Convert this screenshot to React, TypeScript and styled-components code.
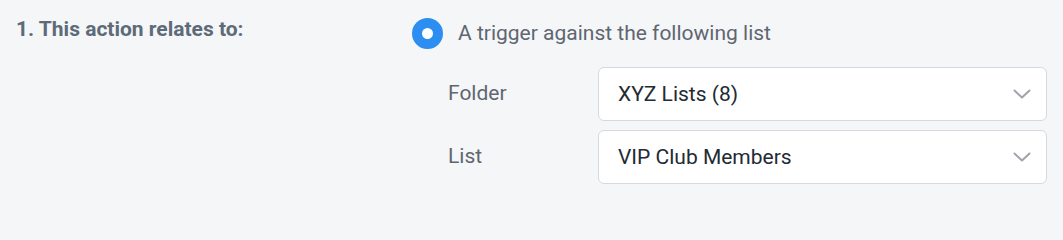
import React from "react";
import styled, { createGlobalStyle } from "styled-components";

const Global = createGlobalStyle`
  html, body { margin: 0; padding: 0; background: #f5f6f8; }
  body { font-family: Roboto, "Liberation Sans", Arial, sans-serif; }
`;

const Section = styled.div`
  display: grid;
  grid-template-columns: 396px 1fr;
  padding: 18px 16px 17px 16px;
  background: #f5f6f8;
`;

const Title = styled.div`
  font-size: 21px;
  font-weight: 700;
  color: #5d6b79;
  line-height: 22px;
`;

const Options = styled.div`
  display: flex;
  flex-direction: column;
`;

const RadioRow = styled.label`
  display: flex;
  align-items: center;
  gap: 15px;
  height: 31px;
  margin-bottom: 18px;
`;

const RadioDot = styled.span`
  box-sizing: border-box;
  width: 31px;
  height: 31px;
  border-radius: 50%;
  border: 10px solid #2c8ef0;
  background: #fff;
  flex: none;
`;

const RadioText = styled.span`
  font-size: 21px;
  color: #5f6670;
  margin-top: -2px;
`;

const Fields = styled.div`
  display: grid;
  grid-template-columns: 150px 1fr;
  row-gap: 9px;
  padding-left: 36px;
  align-items: center;
`;

const FieldLabel = styled.span`
  font-size: 21px;
  color: #5f6670;
  margin-top: -3px;
`;

const Select = styled.div`
  box-sizing: border-box;
  height: 54px;
  display: flex;
  align-items: center;
  justify-content: space-between;
  background: #fff;
  border: 1px solid #d6d9de;
  border-radius: 6px;
  padding: 0 15px 0 19px;
`;

const SelectValue = styled.span`
  font-size: 21px;
  color: #232a33;
`;

const Chevron = () => (
  <svg width="18" height="10" viewBox="0 0 18 10" fill="none">
    <path d="M1.5 1.5 L9 8.5 L16.5 1.5" stroke="#9ea4ac" strokeWidth="2" strokeLinecap="round" strokeLinejoin="round" />
  </svg>
);

export default function App() {
  return (
    <>
      <Global />
      <Section>
        <Title>1. This action relates to:</Title>
        <Options>
          <RadioRow>
            <RadioDot />
            <RadioText>A trigger against the following list</RadioText>
          </RadioRow>
          <Fields>
            <FieldLabel>Folder</FieldLabel>
            <Select>
              <SelectValue>XYZ Lists (8)</SelectValue>
              <Chevron />
            </Select>
            <FieldLabel>List</FieldLabel>
            <Select>
              <SelectValue>VIP Club Members</SelectValue>
              <Chevron />
            </Select>
          </Fields>
        </Options>
      </Section>
    </>
  );
}
